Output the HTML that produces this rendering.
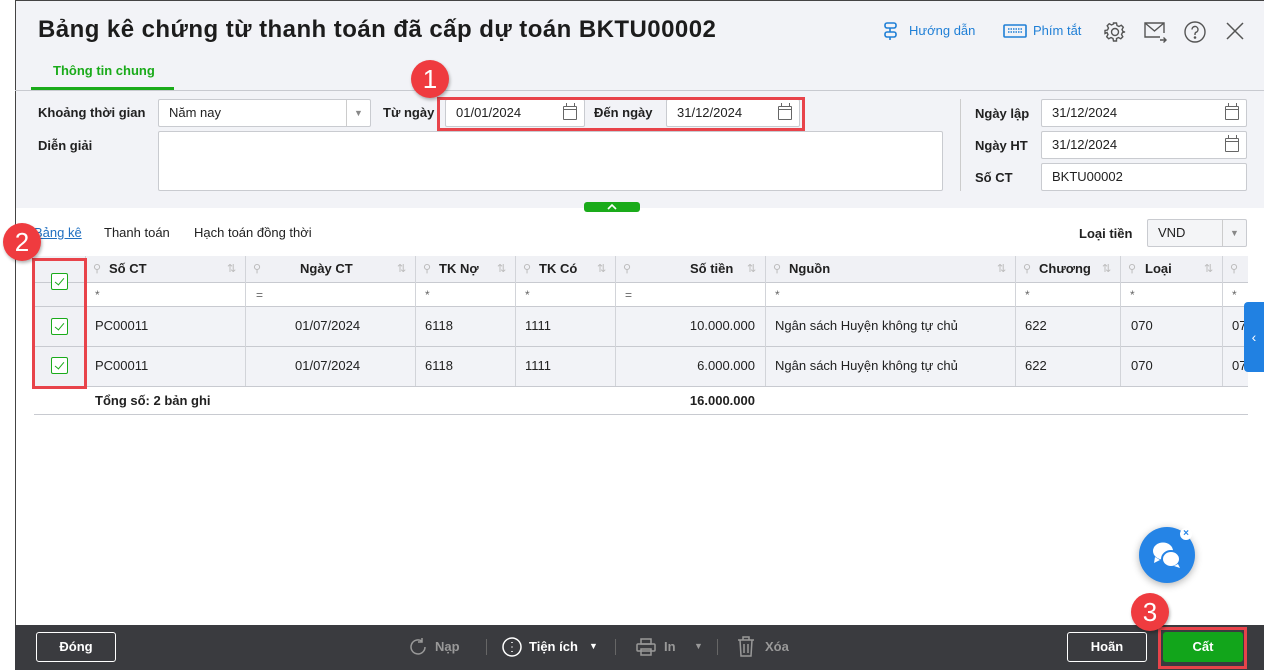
<!DOCTYPE html>
<html><head><meta charset="utf-8"><style>
*{box-sizing:border-box;margin:0;padding:0}
body{width:1264px;height:670px;overflow:hidden;background:#fff;font-family:"Liberation Sans",sans-serif;font-size:13px;color:#212121;position:relative}
.a{position:absolute}
.b{font-weight:bold}
.inp{position:absolute;background:#fff;border:1px solid #c9cbd0;border-radius:2px;height:28px;line-height:26px;padding-left:10px;font-size:13px}
.cal{position:absolute;right:7px;top:6px;width:14px;height:14px;border:1.3px solid #666;border-radius:1px}
.cal:before{content:"";position:absolute;left:2px;top:-4px;width:7px;height:3px;border-left:1.3px solid #666;border-right:1.3px solid #666}
.cal:after{content:"";position:absolute;left:0;right:0;top:2px;border-top:1.3px solid #666}
.cb{position:absolute;width:17px;height:17px;border:1.5px solid #1aab1a;border-radius:2px;background:#fff}
.cb:after{content:"";position:absolute;left:5px;top:2px;width:4px;height:8px;border:solid #1aab1a;border-width:0 1.5px 1.5px 0;transform:rotate(40deg)}
.vl{position:absolute;top:256px;height:130px;border-left:1px solid #d2d4d9}
.hd{position:absolute;top:256px;height:26px;line-height:26px;font-weight:bold;font-size:13px}
.pin{position:absolute;top:262px;color:#bbb;font-size:11px}
.srt{position:absolute;top:262px;color:#bbb;font-size:11px}
.ft{position:absolute;top:288px;color:#666;font-size:12px}
.c{position:absolute;font-size:13px}
.badge{position:absolute;width:38px;height:38px;border-radius:50%;background:#ef3b3f;color:#fff;font-size:26px;text-align:center;line-height:38px;box-shadow:1px 2px 3px rgba(0,0,0,.3)}
.red{position:absolute;border:3px solid #e8434a}
.btn{position:absolute;top:632px;height:30px;border:1px solid #fff;border-radius:3px;color:#fff;font-weight:bold;text-align:center;line-height:28px}
.tb{position:absolute;top:639px;color:#999;font-weight:bold;font-size:13px}
</style></head><body>
<div class="a" style="left:15px;top:0;width:1249px;height:208px;background:#f2f3f7"></div>
<div class="a" style="left:15px;top:0;width:1px;height:625px;background:#444"></div>
<div class="a" style="left:15px;top:0;width:1249px;height:1px;background:#444"></div>
<div class="a b" style="left:38px;top:16px;font-size:24px;color:#1c1c1c;letter-spacing:0.45px">Bảng kê chứng từ thanh toán đã cấp dự toán BKTU00002</div>
<svg class="a" style="left:882px;top:22px" width="18" height="18" viewBox="0 0 18 18" fill="none" stroke="#1f7fd6" stroke-width="1.6"><rect x="3" y="1" width="11" height="5" rx="2"/><rect x="3" y="10" width="11" height="5" rx="2"/><path d="M8 6v4M8 15v3"/></svg>
<div class="a" style="left:909px;top:23px;color:#1f7fd6;font-size:13px">Hướng dẫn</div>
<svg class="a" style="left:1003px;top:24px" width="24" height="14" viewBox="0 0 24 14" fill="none" stroke="#1f7fd6" stroke-width="1.6"><rect x="1" y="1" width="22" height="12" rx="1"/><path d="M5 5h14M5 8h14" stroke-dasharray="1.5 1"/></svg>
<div class="a" style="left:1033px;top:23px;color:#1f7fd6;font-size:13px">Phím tắt</div>
<svg class="a" style="left:1104px;top:21px" width="22" height="22" viewBox="0 0 22 22" fill="none" stroke="#555" stroke-width="1.4"><circle cx="11" cy="11" r="3.5"/><path d="M9.5 2h3l.5 2.5 2 1 2.3-1.3 2 2-1.3 2.3 1 2L21 11v0l-2.5.5-1 2 1.3 2.3-2 2-2.3-1.3-2 1L12.5 20h-3l-.5-2.5-2-1-2.3 1.3-2-2 1.3-2.3-1-2L1 12.5v-3l2.5-.5 1-2-1.3-2.3 2-2 2.3 1.3 2-1z"/></svg>
<svg class="a" style="left:1143px;top:21px" width="24" height="22" viewBox="0 0 24 22" fill="none" stroke="#555" stroke-width="1.4"><path d="M17 16H2V2h19v10"/><path d="M2 2l9.5 8L21 2"/><path d="M17 19h6M20.5 16.5l2.5 2.5-2.5 2.5"/></svg>
<svg class="a" style="left:1184px;top:21px" width="22" height="22" viewBox="0 0 22 22" fill="none" stroke="#555" stroke-width="1.4"><circle cx="11" cy="11" r="10"/><path d="M8 8.5a3 3 0 1 1 4 2.8c-.8.4-1 1-1 2v.7"/><circle cx="11" cy="16.5" r=".6" fill="#555"/></svg>
<svg class="a" style="left:1226px;top:22px" width="18" height="18" viewBox="0 0 18 18" stroke="#555" stroke-width="1.5"><path d="M1 1l16 16M17 1L1 17"/></svg>
<div class="a" style="left:53px;top:63px;color:#1aab1a;font-weight:bold;font-size:13px">Thông tin chung</div>
<div class="a" style="left:31px;top:87px;width:143px;height:3px;background:#1aab1a"></div>
<div class="a" style="left:15px;top:90px;width:1249px;height:1px;background:#c8cad0"></div>
<div class="a b" style="left:38px;top:105px">Khoảng thời gian</div>
<div class="inp" style="left:158px;top:99px;width:213px">Năm nay<span style="position:absolute;right:0;top:0;width:24px;height:26px;border-left:1px solid #ccc;text-align:center;color:#888;font-size:9px">▼</span></div>
<div class="a b" style="left:383px;top:105px">Từ ngày</div>
<div class="inp" style="left:445px;top:99px;width:140px">01/01/2024<span class="cal"></span></div>
<div class="a b" style="left:594px;top:105px">Đến ngày</div>
<div class="inp" style="left:666px;top:99px;width:134px">31/12/2024<span class="cal"></span></div>
<div class="red" style="left:437px;top:97px;width:368px;height:34px"></div>
<div class="a b" style="left:38px;top:138px">Diễn giải</div>
<div class="inp" style="left:158px;top:131px;width:785px;height:60px"></div>
<div class="a" style="left:960px;top:99px;width:1px;height:92px;background:#ccc"></div>
<div class="a b" style="left:975px;top:106px">Ngày lập</div>
<div class="inp" style="left:1041px;top:99px;width:206px">31/12/2024<span class="cal"></span></div>
<div class="a b" style="left:975px;top:138px">Ngày HT</div>
<div class="inp" style="left:1041px;top:131px;width:206px">31/12/2024<span class="cal"></span></div>
<div class="a b" style="left:975px;top:170px">Số CT</div>
<div class="inp" style="left:1041px;top:163px;width:206px">BKTU00002</div>
<div class="badge" style="left:411px;top:60px">1</div>
<div class="a" style="left:584px;top:202px;width:56px;height:10px;background:#1aab1a;border-radius:3px"><svg style="position:absolute;left:23px;top:1px" width="10" height="7" viewBox="0 0 10 7" fill="none" stroke="#fff" stroke-width="1.6"><path d="M1 6l4-4 4 4"/></svg></div>
<div class="a" style="left:34px;top:225px;color:#1f6fc0;text-decoration:underline">Bảng kê</div>
<div class="a" style="left:104px;top:225px">Thanh toán</div>
<div class="a" style="left:194px;top:225px">Hạch toán đồng thời</div>
<div class="a b" style="left:1079px;top:226px">Loại tiền</div>
<div class="inp" style="left:1147px;top:219px;width:100px;background:#f4f5f7">VND<span style="position:absolute;right:0;top:0;width:24px;height:26px;border-left:1px solid #ccc;text-align:center;color:#888;font-size:9px">▼</span></div>
<div class="a" style="left:34px;top:256px;width:1214px;height:26px;background:#f0f1f5"></div>
<div class="a" style="left:34px;top:306px;width:1214px;height:80px;background:#f2f3f7"></div>
<div class="a" style="left:34px;top:256px;width:51px;height:130px;background:#f0f1f5"></div>
<div class="a" style="left:34px;top:282px;width:1214px;height:1px;background:#c8cad0"></div>
<div class="a" style="left:34px;top:306px;width:1214px;height:1px;background:#c8cad0"></div>
<div class="a" style="left:34px;top:346px;width:1214px;height:1px;background:#c8cad0"></div>
<div class="a" style="left:34px;top:386px;width:1214px;height:1px;background:#c8cad0"></div>
<div class="a" style="left:34px;top:414px;width:1214px;height:1px;background:#c8cad0"></div>
<div class="vl" style="left:85px"></div><div class="vl" style="left:245px"></div><div class="vl" style="left:415px"></div><div class="vl" style="left:515px"></div><div class="vl" style="left:615px"></div><div class="vl" style="left:765px"></div><div class="vl" style="left:1015px"></div><div class="vl" style="left:1120px"></div><div class="vl" style="left:1222px"></div>
<div class="pin" style="left:93px">⚲</div><div class="hd" style="left:109px">Số CT</div><div class="srt" style="left:227px">⇅</div>
<div class="pin" style="left:253px">⚲</div><div class="hd" style="left:300px">Ngày CT</div><div class="srt" style="left:397px">⇅</div>
<div class="pin" style="left:423px">⚲</div><div class="hd" style="left:439px">TK Nợ</div><div class="srt" style="left:497px">⇅</div>
<div class="pin" style="left:523px">⚲</div><div class="hd" style="left:539px">TK Có</div><div class="srt" style="left:597px">⇅</div>
<div class="pin" style="left:623px">⚲</div><div class="hd" style="left:690px">Số tiền</div><div class="srt" style="left:747px">⇅</div>
<div class="pin" style="left:773px">⚲</div><div class="hd" style="left:789px">Nguồn</div><div class="srt" style="left:997px">⇅</div>
<div class="pin" style="left:1023px">⚲</div><div class="hd" style="left:1039px">Chương</div><div class="srt" style="left:1102px">⇅</div>
<div class="pin" style="left:1128px">⚲</div><div class="hd" style="left:1145px">Loại</div><div class="srt" style="left:1204px">⇅</div>
<div class="pin" style="left:1230px">⚲</div>
<div class="ft" style="left:95px">*</div><div class="ft" style="left:256px">=</div><div class="ft" style="left:425px">*</div><div class="ft" style="left:525px">*</div><div class="ft" style="left:625px">=</div><div class="ft" style="left:775px">*</div><div class="ft" style="left:1025px">*</div><div class="ft" style="left:1130px">*</div><div class="ft" style="left:1232px">*</div>
<div class="cb" style="left:51px;top:273px"></div>
<div class="cb" style="left:51px;top:318px"></div>
<div class="cb" style="left:51px;top:357px"></div>
<div class="c" style="left:95px;top:318px">PC00011</div><div class="c" style="left:295px;top:318px">01/07/2024</div><div class="c" style="left:425px;top:318px">6118</div><div class="c" style="left:525px;top:318px">1111</div><div class="c" style="left:615px;top:318px;width:140px;text-align:right">10.000.000</div><div class="c" style="left:775px;top:318px">Ngân sách Huyện không tự chủ</div><div class="c" style="left:1025px;top:318px">622</div><div class="c" style="left:1131px;top:318px">070</div><div class="c" style="left:1232px;top:318px">07</div>
<div class="c" style="left:95px;top:358px">PC00011</div><div class="c" style="left:295px;top:358px">01/07/2024</div><div class="c" style="left:425px;top:358px">6118</div><div class="c" style="left:525px;top:358px">1111</div><div class="c" style="left:615px;top:358px;width:140px;text-align:right">6.000.000</div><div class="c" style="left:775px;top:358px">Ngân sách Huyện không tự chủ</div><div class="c" style="left:1025px;top:358px">622</div><div class="c" style="left:1131px;top:358px">070</div><div class="c" style="left:1232px;top:358px">07</div>
<div class="c b" style="left:95px;top:393px">Tổng số: 2 bản ghi</div>
<div class="c b" style="left:615px;top:393px;width:140px;text-align:right">16.000.000</div>
<div class="a" style="left:1248px;top:256px;width:16px;height:160px;background:#fff"></div>
<div class="a" style="left:1244px;top:302px;width:20px;height:70px;background:#2181e2;border-radius:4px 0 0 4px;color:#fff;text-align:center;line-height:70px;font-size:14px">‹</div>
<div class="red" style="left:32px;top:258px;width:55px;height:131px"></div>
<div class="badge" style="left:3px;top:223px">2</div>
<div class="a" style="left:1139px;top:527px;width:56px;height:56px;border-radius:50%;background:#2584e6;box-shadow:0 2px 8px rgba(0,0,0,.3)">
<svg style="position:absolute;left:13px;top:13px" width="30" height="30" viewBox="0 0 30 30" fill="#fff"><ellipse cx="11" cy="11" rx="10" ry="8.5"/><path d="M3 17l-1 6 6-3z"/><ellipse cx="19" cy="19" rx="9" ry="8" stroke="#2584e6" stroke-width="2"/><path d="M26 24l2 4-6-2z"/></svg></div>
<div class="a" style="left:1180px;top:528px;width:12px;height:12px;border-radius:50%;background:#fff;color:#2584e6;font-size:10px;line-height:12px;text-align:center;font-weight:bold">×</div>
<div class="a" style="left:15px;top:625px;width:1249px;height:45px;background:#3a3b3f"></div>
<div class="btn" style="left:36px;width:80px">Đóng</div>
<svg class="a" style="left:408px;top:637px" width="20" height="20" viewBox="0 0 20 20" fill="none" stroke="#999" stroke-width="1.5"><path d="M17 10a7 7 0 1 1-3-5.8M14 1v4h-4"/></svg>
<div class="tb" style="left:435px">Nạp</div>
<div class="a" style="left:486px;top:639px;width:1px;height:16px;background:#666"></div>
<svg class="a" style="left:502px;top:637px" width="20" height="20" viewBox="0 0 20 20" fill="none" stroke="#fff" stroke-width="1.5"><circle cx="10" cy="10" r="9"/><path d="M10 5v1M10 9.5v1M10 14v1"/></svg>
<div class="tb" style="left:529px;color:#fff">Tiện ích</div><div class="a" style="left:589px;top:641px;color:#fff;font-size:9px">▼</div>
<div class="a" style="left:615px;top:639px;width:1px;height:16px;background:#666"></div>
<svg class="a" style="left:636px;top:637px" width="20" height="20" viewBox="0 0 20 20" fill="none" stroke="#999" stroke-width="1.5"><rect x="5" y="2" width="10" height="5"/><rect x="1" y="7" width="18" height="7" rx="1"/><rect x="5" y="12" width="10" height="6"/></svg>
<div class="tb" style="left:664px">In</div><div class="a" style="left:694px;top:641px;color:#999;font-size:9px">▼</div>
<div class="a" style="left:717px;top:639px;width:1px;height:16px;background:#666"></div>
<svg class="a" style="left:737px;top:636px" width="18" height="21" viewBox="0 0 18 21" fill="none" stroke="#999" stroke-width="1.5"><path d="M1 4h16M6 4V1h6v3M3 4l1 16h10l1-16M7 8v9M11 8v9"/></svg>
<div class="tb" style="left:765px">Xóa</div>
<div class="btn" style="left:1067px;width:80px">Hoãn</div>
<div class="btn" style="left:1163px;width:80px;background:#12a51b;border-color:#12a51b">Cất</div>
<div class="red" style="left:1158px;top:627px;width:89px;height:42px"></div>
<div class="badge" style="left:1131px;top:593px">3</div>
</body></html>
